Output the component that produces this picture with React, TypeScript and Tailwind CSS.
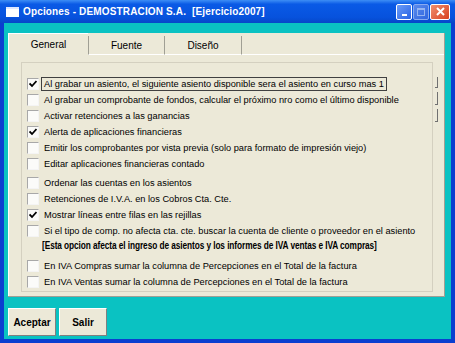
import React from "react"

const rows: { label: string; checked?: boolean; focus?: boolean }[] = [
  { label: "Al grabar un asiento, el siguiente asiento disponible sera el asiento en curso mas 1", checked: true, focus: true },
  { label: "Al grabar un comprobante de fondos, calcular el próximo nro como el último disponible" },
  { label: "Activar retenciones a las ganancias" },
  { label: "Alerta de aplicaciones financieras", checked: true },
  { label: "Emitir los comprobantes por vista previa (solo para formato de impresión viejo)" },
  { label: "Editar aplicaciones financieras contado" },
]

const rows2: { label: string; checked?: boolean }[] = [
  { label: "Ordenar las cuentas en los asientos" },
  { label: "Retenciones de I.V.A. en los Cobros Cta. Cte." },
  { label: "Mostrar líneas entre filas en las rejillas", checked: true },
  { label: "Si el tipo de comp. no afecta cta. cte. buscar la cuenta de cliente o proveedor en el asiento" },
]

const rows3 = [
  "En IVA Compras sumar la columna de Percepciones en el Total de la factura",
  "En IVA Ventas sumar la columna de Percepciones en el Total de la factura",
]

function Check({ checked }: { checked?: boolean }) {
  return (
    <div className="w-[12px] h-[12px] shrink-0 border-t border-l border-[#a8a8a8] border-b border-r border-b-[#f4f4f4] border-r-[#f4f4f4] bg-[#fbfbf9] flex items-center justify-center">
      {checked && (
        <svg width="8" height="8" viewBox="0 0 8 8">
          <path d="M0.5 3.5 L3 6 L7.5 1" stroke="#000" strokeWidth="1.8" fill="none" />
        </svg>
      )}
    </div>
  )
}

function Row({ label, checked, focus }: { label: string; checked?: boolean; focus?: boolean }) {
  return (
    <div className="h-[16px] flex items-center gap-[2px] whitespace-nowrap">
      <Check checked={checked} />
      <span className={focus ? "px-[2px] border border-[#404040] leading-[12px]" : "px-[3px] leading-[12px]"}>
        {label}
      </span>
    </div>
  )
}

export default function App() {
  return (
    <div className="w-[455px] h-[343px] bg-[#0a3fd0] flex flex-col overflow-hidden" style={{ fontFamily: '"Liberation Sans", Arial, sans-serif' }}>
      {/* barra de titulo */}
      <div className="h-[23px] shrink-0 flex items-center bg-[linear-gradient(#3d8ef5,#0a5ae6_18%,#0752dd_75%,#0647c8)] pl-[6px] pr-[5px]">
        <div className="w-[13px] h-[10px] bg-white border-t-[2px] border-[#dfe8ff] mr-[4px]" />
        <span className="text-white font-bold text-[10px] tracking-[0.15px] whitespace-pre">Opciones - DEMOSTRACION S.A.  [Ejercicio2007]</span>
        <div className="ml-auto flex gap-[1px]">
          <div className="w-[16px] h-[16px] rounded-[2px] border border-white bg-[linear-gradient(135deg,#6a9cf8,#2a63e4)] flex items-end justify-center pb-[3px]">
            <div className="w-[5px] h-[2px] bg-white" />
          </div>
          <div className="w-[16px] h-[16px] rounded-[2px] border border-[#a8c0f4] bg-[linear-gradient(135deg,#6f98ee,#3a6be0)] flex items-center justify-center opacity-80">
            <div className="w-[8px] h-[8px] border border-[#b8cdf6] border-t-2" />
          </div>
          <div className="w-[20px] h-[16px] rounded-[2px] border border-white bg-[linear-gradient(135deg,#f09070,#d84020)] flex items-center justify-center">
            <svg width="9" height="9" viewBox="0 0 9 9">
              <path d="M1 1 L8 8 M8 1 L1 8" stroke="#fff" strokeWidth="2" />
            </svg>
          </div>
        </div>
      </div>

      {/* area cliente */}
      <div className="flex-1 mx-[4px] mb-[4px] bg-[#0ac2c2] pt-[10px] pl-[4px] flex flex-col">
        <div className="w-[437px] h-[264px] bg-[#ece9d8] flex flex-col text-[9.25px] text-black border-r border-b border-r-[#a09f94] border-b-[#a09f94]">
          {/* pestañas */}
          <div className="h-[22px] flex items-end text-[10px]">
            <div className="w-[80px] h-[22px] flex items-center justify-center border-t border-l border-white">General</div>
            <div className="w-[76px] h-[19px] flex items-center justify-center border-l border-[#a09f94] border-b border-b-white">Fuente</div>
            <div className="w-[78px] h-[19px] flex items-center justify-center border-l border-[#a09f94] border-r border-r-[#a09f94] border-b border-b-white">Diseño</div>
            <div className="flex-1 h-[19px] border-b border-white" />
          </div>
          {/* pagina */}
          <div className="flex-1 flex pl-[12px] pt-[7px] pb-[4px] border-l border-white">
            <div className="w-[412px] border border-[#d4d0c0] flex flex-col pl-[5px] pt-[13px]">
              {rows.map((r) => (
                <Row key={r.label} {...r} />
              ))}
              <div className="h-[3px]" />
              {rows2.map((r) => (
                <Row key={r.label} {...r} />
              ))}
              <div className="pl-[15px] h-[13px] flex items-center">
                <span className="font-bold text-[10.5px] whitespace-nowrap origin-left scale-x-[0.79] tracking-[-0.1px]">
                  [Esta opcion afecta el ingreso de asientos y los informes de IVA ventas e IVA compras]
                </span>
              </div>
              <div className="h-[6px]" />
              {rows3.map((r) => (
                <Row key={r} label={r} />
              ))}
            </div>
            <div className="flex-1 flex flex-col items-start pt-[15px] pl-[2px] gap-[4px]">
              <div className="w-[3px] h-[11px] border-r border-b border-[#707070]" />
              <div className="w-[3px] h-[13px] border-r border-b border-[#707070]" />
              <div className="w-[3px] h-[13px] border-r border-b border-[#707070]" />
            </div>
          </div>
        </div>
        {/* botones */}
        <div className="flex gap-[3px] mt-[11px]">
          <button className="w-[48px] h-[28px] bg-[#ece9d8] border border-t-white border-l-white border-r-[#808080] border-b-[#808080] font-bold text-[10px]">Aceptar</button>
          <button className="w-[48px] h-[28px] bg-[#ece9d8] border border-t-white border-l-white border-r-[#808080] border-b-[#808080] font-bold text-[10px]">Salir</button>
        </div>
      </div>
    </div>
  )
}
